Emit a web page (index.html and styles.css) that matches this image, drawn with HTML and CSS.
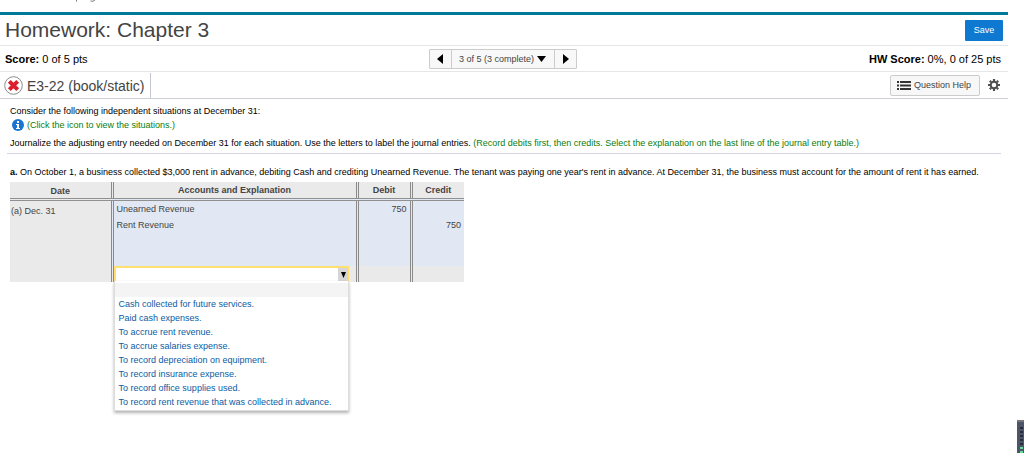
FILE: index.html
```
<!DOCTYPE html>
<html lang="en">
<head>
<meta charset="utf-8">
<title>Homework: Chapter 3</title>
<link rel="stylesheet" href="styles.css">
</head>
<body>
<div class="page">
  <div class="crumb" aria-hidden="true">
    <svg width="110" height="3" viewBox="0 0 110 3"><path d="M76.500 0V1.500M90.500 1Q93 2 95 0" fill="none" stroke="#777" stroke-width="1"/></svg>
  </div>
  <header class="title-bar">
    <h1>Homework: Chapter 3</h1>
    <button class="save" type="button">Save</button>
  </header>
  <div class="score-bar">
    <p class="score"><b>Score:</b> 0 of 5 pts</p>
    <nav class="pager" aria-label="Questions">
      <button type="button" aria-label="Previous question"><svg width="6" height="10" viewBox="0 0 6 10"><path d="M6 0V10L0 5z"/></svg></button>
      <button type="button" class="current">3 of 5 (3 complete) <svg width="9" height="6" viewBox="0 0 9 6"><path d="M0 0H9L4.500 6z"/></svg></button>
      <button type="button" aria-label="Next question"><svg width="6" height="10" viewBox="0 0 6 10"><path d="M0 0V10L6 5z"/></svg></button>
    </nav>
    <p class="score total"><b>HW Score:</b> 0%, 0 of 25 pts</p>
  </div>
  <div class="question-bar">
    <div class="question-id">
      <svg width="19" height="19" viewBox="0 0 19 19" role="img" aria-label="Incorrect"><circle cx="9.500" cy="9.500" r="8.800" fill="#fff" stroke="#8b8b8b"/><path d="M5.300 5.300L13.700 13.700M13.700 5.300L5.300 13.700" stroke="#dc1f2e" stroke-width="4"/></svg>
      <h2>E3-22 (book/static)</h2>
    </div>
    <div class="tools">
      <button class="help" type="button"><svg width="14" height="9" viewBox="0 0 14 9"><path d="M0 0h2v2H0zM3 0h11v2H3zM0 3.500h2v2H0zM3 3.500h11v2H3zM0 7h2v2H0zM3 7h11v2H3z" fill="#333"/></svg>Question Help</button>
      <button class="gear" type="button" aria-label="Settings"><svg width="12" height="12" viewBox="0 0 12 12"><g fill="none" stroke="#505050"><circle cx="6" cy="6" r="3.300" stroke-width="2"/><path d="M6 0v2M6 10v2M0 6h2M10 6h2M1.800 1.800l1.400 1.400M8.800 8.800l1.400 1.400M10.200 1.800L8.800 3.200M3.200 8.800l-1.400 1.400" stroke-width="2.200"/></g></svg></button>
    </div>
  </div>
  <main class="content">
    <section class="prompt">
      <p>Consider the following independent situations at December 31:</p>
      <a class="info" href="#"><svg width="12" height="12" viewBox="0 0 12 12"><circle cx="6" cy="6" r="6" fill="#1b75d0"/><path d="M5 2h2v2H5zM4 5h3v4h1v1H4V9h1V6H4z" fill="#fff"/></svg>(Click the icon to view the situations.)</a>
      <p class="task">Journalize the adjusting entry needed on December 31 for each situation. Use the letters to label the journal entries. <span class="hint">(Record debits first, then credits. Select the explanation on the last line of the journal entry table.)</span></p>
    </section>
    <p class="part"><b>a.</b> On October 1, a business collected $3,000 rent in advance, debiting Cash and crediting Unearned Revenue. The tenant was paying one year's rent in advance. At December 31, the business must account for the amount of rent it has earned.</p>
    <table class="journal">
      <thead>
        <tr><th class="date">Date</th><th class="account">Accounts and Explanation</th><th class="debit">Debit</th><th class="credit">Credit</th></tr>
      </thead>
      <tbody>
        <tr class="entry"><td class="date" rowspan="4">(a) Dec. 31</td><td>Unearned Revenue</td><td class="num">750</td><td class="num"></td></tr>
        <tr class="entry"><td>Rent Revenue</td><td class="num"></td><td class="num">750</td></tr>
        <tr class="entry blank"><td></td><td></td><td></td></tr>
        <tr class="explain">
          <td>
            <div class="picker">
              <select aria-label="Explanation"><option></option></select>
              <svg class="arrow" width="10" height="13" viewBox="0 0 10 13"><path d="M0 0H10V13H0z" fill="#d6d6d6"/><path d="M3 4H8L5.500 10z" fill="#000"/></svg>
              <div class="choices" role="listbox" aria-label="Explanations">
                <div class="choice empty" role="option"></div>
                <div class="choice" role="option">Cash collected for future services.</div>
                <div class="choice" role="option">Paid cash expenses.</div>
                <div class="choice" role="option">To accrue rent revenue.</div>
                <div class="choice" role="option">To accrue salaries expense.</div>
                <div class="choice" role="option">To record depreciation on equipment.</div>
                <div class="choice" role="option">To record insurance expense.</div>
                <div class="choice" role="option">To record office supplies used.</div>
                <div class="choice" role="option">To record rent revenue that was collected in advance.</div>
              </div>
            </div>
          </td><td></td><td></td>
        </tr>
      </tbody>
    </table>
  </main>
</div>
<div class="meter" aria-hidden="true"><i></i><i></i><i></i><i></i><i></i><i class="on"></i><i class="on"></i></div>
</body>
</html>
```
FILE: styles.css
```
* { box-sizing: border-box; }
body { margin: 0; background: #fff; color: #000; font-family: "Liberation Sans", Arial, sans-serif; font-size: 9px; line-height: 12px; }
h1, h2, p { margin: 0; padding: 0; font-weight: normal; }
button { font: inherit; margin: 0; padding: 0; cursor: pointer; }
svg { display: block; flex: none; }
.page { min-height: 100vh; margin-right: 16px; }
.crumb { height: 12px; }
.title-bar { display: flex; align-items: center; justify-content: space-between; height: 34px; padding: 0 5px; border-top: 3px solid #007a99; border-bottom: 1px solid #e6e6e6; }
.title-bar h1 { font-size: 21px; line-height: 28px; color: #444; }
.save { width: 38px; height: 21px; border: 0; border-radius: 1px; background: #0f78d0; color: #fff; }
.score-bar { display: grid; grid-template-columns: 1fr auto 1fr; align-items: center; height: 26px; padding: 0 7px 0 5px; border-bottom: 1px solid #e6e6e6; }
.score { font-size: 11px; }
.total { text-align: right; }
.pager { display: flex; height: 20px; border: 1px solid #ccc; border-radius: 1px; background: #f8f8f8; }
.pager button { display: flex; align-items: center; justify-content: center; gap: 3px; width: 21px; border: 0; background: none; color: #444; }
.pager svg { fill: #000; }
.pager .current { width: auto; padding: 0 8px 0 7px; border: solid #ccc; border-width: 0 1px; }
.question-bar { display: flex; align-items: center; justify-content: space-between; height: 27px; padding: 0 8px 0 4px; border-bottom: 1px solid #ccced8; }
.question-id { display: flex; align-items: center; gap: 4px; align-self: flex-end; height: 25px; padding-right: 5px; border-right: 1px solid #c4c6d4; }
.question-id h2 { font-size: 14px; line-height: 20px; color: #444; }
.tools { display: flex; align-items: center; gap: 8px; }
.help { display: flex; align-items: center; gap: 3px; height: 21px; padding: 0 8px 0 6px; border: 1px solid #ccc; border-radius: 2px; background: #f7f7f7; color: #444; }
.gear { border: 0; background: none; }
.content { padding: 6px 7px 0; }
.prompt { padding: 0 3px 4px; border-bottom: 1px solid #d3d3e2; }
.info { display: flex; align-items: center; gap: 3px; height: 15px; padding-left: 2px; color: #0b7d0b; text-decoration: none; }
.hint { color: #0b7d0b; }
.task { margin-top: 5px; }
.part { padding: 12px 3px 4px; }
.journal { margin-left: 3px; border-collapse: collapse; table-layout: fixed; width: 454px; color: #444; }
.journal th { height: 17px; padding: 0; background: #eaeaea; border-bottom: 3px double #909090; }
.journal th.date { padding-top: 3px; width: 102px; }
.account { width: 245px; }
.debit { width: 54px; }
.journal th + th, .entry td, .explain td { border-left: 3px double #8a8a8a; }
.journal td { padding: 2px 3px; vertical-align: top; }
.entry td { height: 17px; background: #e2e8f3; }
.blank td { height: 32px; }
.journal td.date { padding: 4px 1px; border-left: 0; background: #eaeaea; }
.journal .num { text-align: right; }
.journal .explain td { height: 16px; padding: 0; background: #eaeaea; }
.picker { position: relative; z-index: 2; width: 235px; height: 16px; border: 2px solid #ffe070; border-right-width: 1px; border-bottom: 1px solid #ddd; background: #fff; }
.picker select { display: block; appearance: none; width: 100%; height: 13px; padding: 0; border: 0; border-radius: 0; background: #fff; font: inherit; }
.arrow { position: absolute; top: 0; right: 0; pointer-events: none; }
.choices { position: absolute; z-index: 3; top: 100%; left: -2px; right: -1px; padding: 2px 0 1px; background: #fff; border: 1px solid #ddd; border-top: 0; box-shadow: 0 2px 3px rgba(0, 0, 0, .3); color: #0a5ca4; }
.choice { height: 14px; padding-left: 4px; line-height: 14px; }
.empty { height: 14px; background: #f4f4f4; }
.meter { position: fixed; right: 0; bottom: 0; width: 7px; height: 33px; padding: 5px 1px 0 3px; background: #4d5568; border-top: 2px solid #777; }
.meter i { display: block; height: 2px; margin-bottom: 2px; background: #262d3c; }
.meter .on { background: #63dc98; }
```
